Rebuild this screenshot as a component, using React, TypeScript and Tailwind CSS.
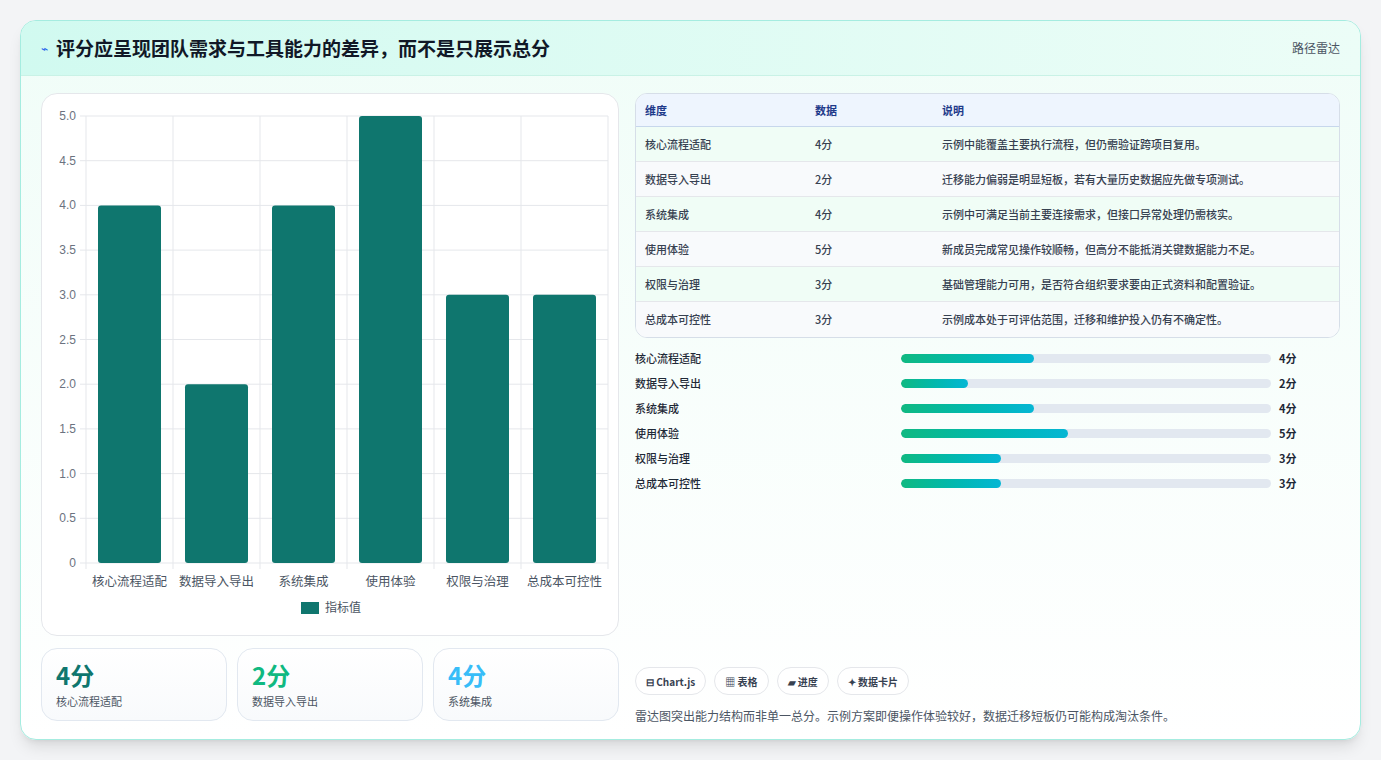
const rows = [
  { name: '核心流程适配', score: 4, note: '示例中能覆盖主要执行流程，但仍需验证跨项目复用。' },
  { name: '数据导入导出', score: 2, note: '迁移能力偏弱是明显短板，若有大量历史数据应先做专项测试。' },
  { name: '系统集成', score: 4, note: '示例中可满足当前主要连接需求，但接口异常处理仍需核实。' },
  { name: '使用体验', score: 5, note: '新成员完成常见操作较顺畅，但高分不能抵消关键数据能力不足。' },
  { name: '权限与治理', score: 3, note: '基础管理能力可用，是否符合组织要求要由正式资料和配置验证。' },
  { name: '总成本可控性', score: 3, note: '示例成本处于可评估范围，迁移和维护投入仍有不确定性。' },
];

function BarChart() {
  const x0 = 44, x1 = 566, y0 = 22, y1 = 469;
  const cw = (x1 - x0) / 6;
  const ticks = [0, 0.5, 1, 1.5, 2, 2.5, 3, 3.5, 4, 4.5, 5];
  const yOf = (v: number) => y1 - (v / 5) * (y1 - y0);
  return (
    <svg width="578" height="543" className="block" style={{ fontFamily: '"Liberation Sans", "Noto Sans CJK SC", sans-serif' }}>
      {ticks.map((t) => (
        <g key={t}>
          <line x1={x0 - 6} x2={x1} y1={yOf(t)} y2={yOf(t)} stroke="#e5e7eb" />
          <text x={x0 - 10} y={yOf(t) + 4} textAnchor="end" fontSize="12" fill="#6b7280">
            {t === 0 ? '0' : t.toFixed(1)}
          </text>
        </g>
      ))}
      {Array.from({ length: 7 }).map((_, i) => (
        <line key={i} x1={x0 + i * cw} x2={x0 + i * cw} y1={y0} y2={y1 + 6} stroke="#e5e7eb" />
      ))}
      {rows.map((r, i) => (
        <g key={r.name}>
          <rect x={x0 + i * cw + 12} y={yOf(r.score)} width={cw - 24} height={y1 - yOf(r.score)} rx="3" fill="#0f766e" />
          <text x={x0 + i * cw + cw / 2} y={y1 + 23} textAnchor="middle" fontSize="12.5" fill="#4b5563">{r.name}</text>
        </g>
      ))}
      <rect x="259" y="508" width="18" height="12" fill="#0f766e" />
      <text x="283" y="518" fontSize="12" fill="#4b5563">指标值</text>
    </svg>
  );
}

export default function App() {
  return (
    <div className="w-[1381px] h-[760px] bg-[#f3f4f6] p-5 pb-0" style={{ fontFamily: '"Noto Sans CJK SC", "Noto Sans", sans-serif' }}>
      <div className="h-[720px] rounded-2xl border border-[#a5ece0] bg-gradient-to-b from-[#f0fdf8] to-white shadow-lg overflow-hidden">
        <div className="h-[55px] flex items-center justify-between px-5 bg-gradient-to-r from-[#d1faf0] to-[#ecfdf7] border-b border-[#c9f2e6]">
          <div className="flex items-center gap-2">
            <span className="text-[#2563eb] text-xs">⌁</span>
            <h1 className="text-[19px] font-bold text-[#111827]">评分应呈现团队需求与工具能力的差异，而不是只展示总分</h1>
          </div>
          <span className="text-xs text-[#4b5563]">路径雷达</span>
        </div>
        <div className="flex gap-4 px-5 pt-[17px]">
          <div className="w-[578px] flex flex-col gap-3">
            <div className="h-[543px] bg-white rounded-2xl border border-[#e5e7eb]">
              <BarChart />
            </div>
            <div className="grid grid-cols-3 gap-[10px]">
              {[
                { v: '4分', c: 'text-[#0f766e]', l: '核心流程适配' },
                { v: '2分', c: 'text-[#10b981]', l: '数据导入导出' },
                { v: '4分', c: 'text-[#38bdf8]', l: '系统集成' },
              ].map((s) => (
                <div key={s.l} className="h-[73px] rounded-2xl border border-[#e2e8f0] bg-gradient-to-b from-white to-[#f8fafc] px-[14px] pt-[10px]">
                  <div className={`text-[24px] font-bold leading-8 ${s.c}`}>{s.v}</div>
                  <div className="text-[11px] text-[#4b5563] mt-[2px]">{s.l}</div>
                </div>
              ))}
            </div>
          </div>
          <div className="flex-1 flex flex-col">
            <div className="rounded-xl border border-[#d6dee8] overflow-hidden bg-white">
              <div className="flex h-[33px] items-center bg-[#eef5fe] border-b border-[#c7d7ec] text-[11px] font-semibold text-[#1e3a8a] px-[9px]">
                <div className="w-[170px]">维度</div>
                <div className="w-[127px]">数据</div>
                <div>说明</div>
              </div>
              {rows.map((r, i) => (
                <div key={r.name} className={`flex h-[35px] items-center text-[11px] font-medium text-[#374151] px-[9px] ${i < 5 ? 'border-b border-[#e5e7eb]' : ''} ${i % 2 === 0 ? 'bg-[#f0fdf6]' : 'bg-[#f8fafc]'}`}>
                  <div className="w-[170px]">{r.name}</div>
                  <div className="w-[127px]">{r.score}分</div>
                  <div>{r.note}</div>
                </div>
              ))}
            </div>
            <div className="flex flex-col mt-[8px]">
              {rows.map((r) => (
                <div key={r.name} className="flex items-center h-[25px] text-[11px] font-medium text-[#1f2937]">
                  <div className="w-[266px]">{r.name}</div>
                  <div className="w-[370px] h-[9px] rounded-full bg-[#e2e8f0] overflow-hidden">
                    <div className="h-full rounded-full bg-gradient-to-r from-[#10b981] to-[#06b6d4]" style={{ width: `${r.score * 9}%` }} />
                  </div>
                  <div className="ml-2 font-bold">{r.score}分</div>
                </div>
              ))}
            </div>
            <div className="flex gap-2 mt-[171px]">
              {['⊟ Chart.js', '▦ 表格', '▰ 进度', '✦ 数据卡片'].map((c) => (
                <span key={c} className="h-[28px] px-[10px] flex items-center rounded-full border border-[#e5e7eb] bg-white text-[10px] font-semibold text-[#374151]">{c}</span>
              ))}
            </div>
            <p className="mt-[12px] text-[12px] text-[#4b5563]">雷达图突出能力结构而非单一总分。示例方案即便操作体验较好，数据迁移短板仍可能构成淘汰条件。</p>
          </div>
        </div>
      </div>
    </div>
  );
}
